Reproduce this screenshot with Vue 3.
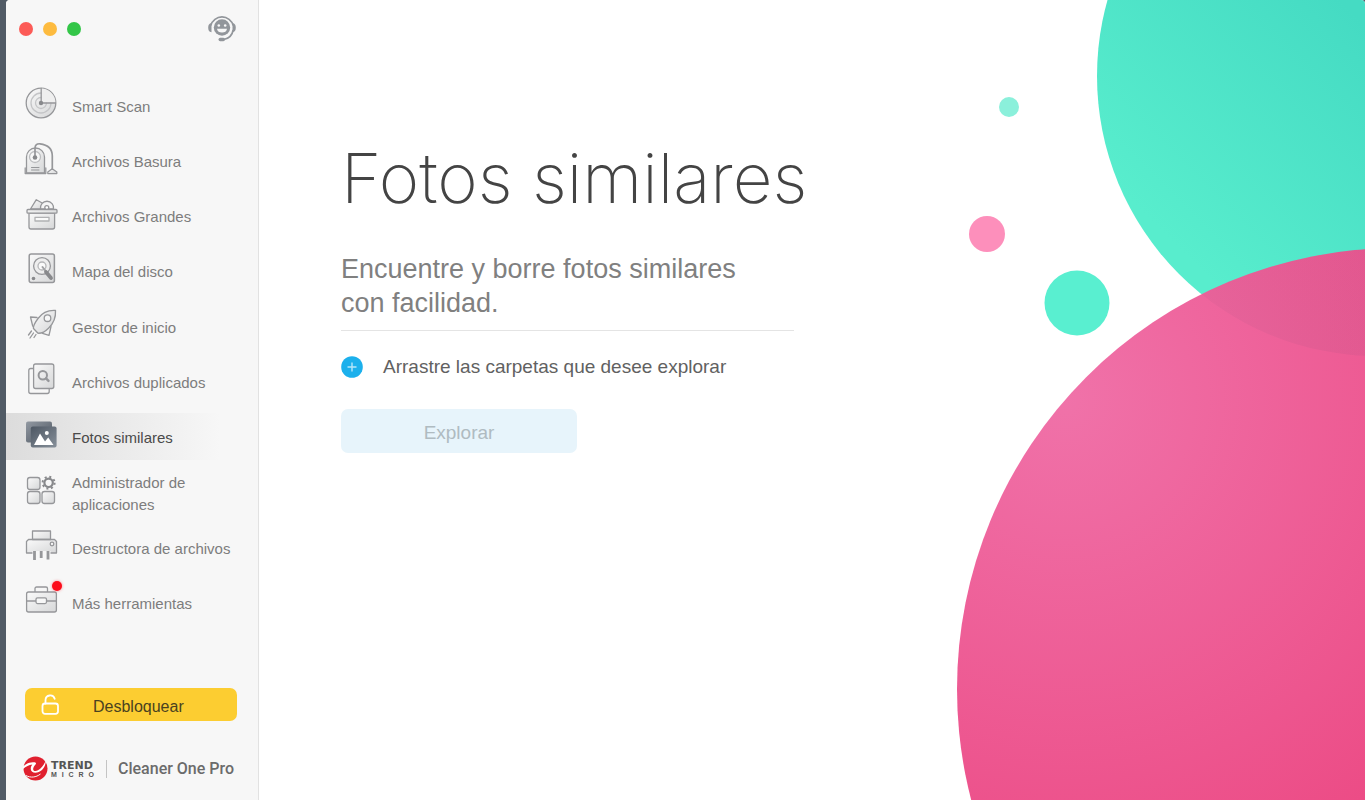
<template>
  <div class="desktop">
    <div class="window">
      <aside class="sidebar">
        <header class="titlebar">
          <div class="lights">
            <button class="light light-close" aria-label="Cerrar"></button>
            <button class="light light-min" aria-label="Minimizar"></button>
            <button class="light light-max" aria-label="Ampliar"></button>
          </div>
          <button class="support" aria-label="Soporte">
            <svg width="30" height="30" viewBox="0 0 30 30">
              <circle cx="15" cy="13.5" r="8.2" fill="#92969b" />
              <path d="M3.8 11.5A11.6 11.6 0 0 1 26.2 11.5M26.2 16a11.8 11.8 0 0 1-9.5 9.5" fill="none" stroke="#92969b" stroke-width="1.7" />
              <path d="M4.5 9v9.2c-2.300-.2-3.300-1.800-3.300-4.500s1-4.500 3.300-4.700zM25.500 9v9.200c2.300-.2 3.300-1.800 3.300-4.500s-1-4.500-3.300-4.700z" fill="#92969b" />
              <rect x="11.5" y="23.8" width="6.5" height="3.4" rx="1.7" fill="#92969b" />
              <circle cx="11.8" cy="11.5" r="1.3" fill="#f7f7f7" />
              <circle cx="18.2" cy="11.5" r="1.3" fill="#f7f7f7" />
              <path d="M10 14.8h10c-.4 2.600-2.300 3.800-5 3.800s-4.600-1.200-5-3.800z" fill="#f7f7f7" />
            </svg>
          </button>
        </header>

        <nav>
          <ul class="menu">
            <li v-for="item in items" :key="item.id">
              <a
                href="#"
                class="menu-item"
                :class="{ active: item.id === current }"
                @click.prevent="current = item.id"
              >
                <svg class="icon" width="40" height="40" viewBox="0 0 40 40">
                  <defs>
                    <linearGradient :id="'g-' + item.id" x1="0" y1="0" x2="1" y2="1">
                      <stop offset="0" stop-color="#fafafa" />
                      <stop offset="1" stop-color="#d6d7d8" />
                    </linearGradient>
                  </defs>
                  <g
                    :fill="`url(#g-${item.id})`"
                    stroke="#96979a"
                    stroke-width="1.3"
                    stroke-linejoin="round"
                    stroke-linecap="round"
                  >
                    <template v-if="item.id === 'scan'">
                      <circle cx="19" cy="18" r="14.8" />
                      <circle cx="19" cy="18" r="10" fill="none" stroke="#c4c5c7" />
                      <circle cx="19" cy="18" r="5.5" fill="none" stroke="#c4c5c7" />
                      <path d="M19.5 3.5A14.5 14.5 0 0 1 33.5 17.5H19.5z" fill="#efefef" stroke="none" />
                      <path d="M19.2 3.5V18H33.5" fill="none" />
                      <circle cx="19" cy="18" r="2.2" fill="#88898c" stroke="none" />
                    </template>
                    <template v-else-if="item.id === 'junk'">
                      <path d="M4.5 33V17a9 9 0 0 1 18 0v16z" />
                      <path d="M3.2 28v5.5h20.6V28" fill="none" />
                      <circle cx="13" cy="17" r="5.5" fill="#f7f7f7" stroke="#bdbec0" />
                      <path d="M13 17V8.500c0-3.500 2-5 5-4.700C26 4.800 30.300 9 30.300 16v12.500" fill="none" stroke-width="1.7" />
                      <circle cx="13" cy="17.5" r="2.3" fill="#88898c" stroke="none" />
                      <path d="M9.5 27.5h7.5M9.5 30h7.5" fill="none" stroke-width="1" />
                      <path d="M30.2 28.8l-4.400 3.200v1.600h9V32z" />
                    </template>
                    <template v-else-if="item.id === 'large'">
                      <path d="M8.5 14l5.800-9.300 8.200 4.600-3 4.700z" />
                      <path d="M18.5 14a6.600 6.600 0 1 1 13 0z" fill="#f5f5f5" />
                      <circle cx="24.8" cy="12.6" r="2" fill="#fff" />
                      <path d="M7 18.2h25.6V32a2 2 0 0 1-2 2H9a2 2 0 0 1-2-2z" />
                      <rect x="5" y="14.5" width="30" height="3.7" rx="1" />
                      <rect x="13" y="22.3" width="14" height="3.7" fill="#fafafa" stroke="#b0b1b3" />
                    </template>
                    <template v-else-if="item.id === 'disk'">
                      <rect x="7.2" y="4" width="25.2" height="28.5" rx="2" stroke-width="1.5" />
                      <circle cx="20" cy="16" r="8.4" fill="#eee" />
                      <circle cx="20" cy="16" r="4" fill="#fafafa" stroke="#b5b6b8" />
                      <path d="M20.5 17l3.500 4.500" fill="none" stroke="#a0a1a4" stroke-width="2" />
                      <path d="M24 22l5 6" fill="none" stroke="#88898c" stroke-width="3.8" />
                      <circle cx="11.5" cy="28.5" r="1.8" fill="#88898c" stroke="none" />
                    </template>
                    <template v-else-if="item.id === 'startup'">
                      <path d="M15 11.5L8.5 11l2.200 9M29 20.500l-2 8.800-6.500-2" fill="#f2f2f2" />
                      <path d="M33.5 4.5c-8-.5-13.500 2.500-17.500 8-3 4-5 7.500-4.500 10l4.500 4.700c3.500.3 7-1.500 10.500-5 5-4.700 7.500-10 7-17.700z" />
                      <circle cx="25.5" cy="12.2" r="3.3" fill="#f7f7f7" />
                      <path d="M9.5 25l-3 4M11.5 27l-3.500 5M14 28.500l-2 3" fill="none" />
                    </template>
                    <template v-else-if="item.id === 'duplicates'">
                      <rect x="6.8" y="7.5" width="20.4" height="25" rx="2" fill="#f7f7f7" />
                      <rect x="11.6" y="3" width="20.2" height="24.5" rx="2" />
                      <circle cx="20.8" cy="14.2" r="4.2" fill="none" stroke-width="2" />
                      <path d="M24 17.4l2.500 2.500" fill="none" stroke-width="2.4" />
                    </template>
                    <template v-else-if="item.id === 'photos'">
                      <linearGradient id="photo-back" x1="0" y1="0" x2="1" y2="1">
                        <stop offset="0" stop-color="#9299a2" />
                        <stop offset="1" stop-color="#4d5661" />
                      </linearGradient>
                      <linearGradient id="photo-front" x1="0" y1="0" x2="1" y2="1">
                        <stop offset="0" stop-color="#4d5763" />
                        <stop offset="1" stop-color="#87909a" />
                      </linearGradient>
                      <g stroke="none">
                        <rect x="4" y="5.5" width="26" height="21" rx="2" fill="url(#photo-back)" />
                        <rect x="8.8" y="10.5" width="25.8" height="21" rx="2" fill="url(#photo-front)" />
                        <path d="M12 29l6-11.500 5 8 3.200-4 5.300 7.500z" fill="#fff" />
                        <circle cx="24.8" cy="17" r="2" fill="#fff" />
                      </g>
                    </template>
                    <template v-else-if="item.id === 'apps'">
                      <rect x="5.5" y="5.5" width="12.5" height="12" rx="2.5" />
                      <rect x="5.5" y="19.5" width="12.5" height="12" rx="2.5" />
                      <rect x="20" y="19.5" width="12.5" height="12" rx="2.5" />
                      <circle cx="26.6" cy="10.8" r="4.2" fill="#f7f7f7" stroke="#88898c" stroke-width="2.2" />
                      <circle cx="26.6" cy="10.8" r="6" fill="none" stroke="#88898c" stroke-width="2" stroke-dasharray="2 2.71" stroke-linecap="butt" />
                    </template>
                    <template v-else-if="item.id === 'shredder'">
                      <rect x="10.5" y="4" width="18" height="11" />
                      <path d="M6.5 12.5h26l2 2V26h-30V14.5z" />
                      <path d="M10.5 12.5h18" fill="none" />
                      <circle cx="30" cy="17" r="1.8" fill="#f7f7f7" />
                      <path d="M10.5 24h18v6h-18z" fill="#f7f7f7" stroke="none" />
                      <path d="M12.5 24v9M19.2 24v7M26 24v8.5" fill="none" stroke-width="2.8" stroke-linecap="butt" />
                    </template>
                    <template v-else>
                      <path d="M13 10V6.500a1.500 1.500 0 0 1 1.500-1.500h9.500a1.500 1.500 0 0 1 1.500 1.500V10" fill="none" />
                      <rect x="4.6" y="10" width="29.8" height="20" rx="2" />
                      <path d="M5 19h29" fill="none" />
                      <rect x="14" y="15.8" width="10.5" height="5.8" rx="1.5" fill="#f7f7f7" />
                    </template>
                  </g>
                </svg>
                <span class="label">{{ item.label }}</span>
                <span v-if="item.badge" class="badge"></span>
              </a>
            </li>
          </ul>
        </nav>

        <button class="unlock">
          <svg width="20" height="24" viewBox="0 0 20 24" fill="none" stroke="#fff" stroke-width="1.8">
            <rect x="1.5" y="10.5" width="15.5" height="10.3" rx="2.5" />
            <path d="M4.5 10.5V7a4.700 4.700 0 0 1 9.200-1.200" stroke-linecap="round" />
          </svg>
          <span>Desbloquear</span>
        </button>

        <footer class="brand">
          <svg width="25" height="25" viewBox="0 0 25 25">
            <circle cx="12.5" cy="12.5" r="12" fill="#e0202f" />
            <path d="M0 10.500C2.500 8 6 6 10.500 6.200c2.200.1 3 .8 2.200 2C11 10 10 11.800 10.200 13.500c.4 1.800 2.600 1.900 4.800.8 3.700-1.900 6.300-6 8-10.300-.3 6-3 10.300-7.200 12-4 1.600-7.700.5-8-2.800-.2-2.200.6-3.500 1.500-4.800C6 8.500 3 10.500 0 13z" fill="#fff" />
            <path d="M3 19.500c4.500 2.500 10 2 14.500-1.500" fill="none" stroke="#f7f7f7" stroke-width="1" />
          </svg>
          <span class="brand-name">
            <span class="trend">TREND</span>
            <span class="micro"><i>M</i><i>I</i><i>C</i><i>R</i><i>O</i></span>
          </span>
          <span class="product">Cleaner One Pro</span>
        </footer>
      </aside>

      <main class="content">
        <svg class="bubbles" width="425" height="800" viewBox="0 0 425 800" aria-hidden="true">
          <defs>
            <linearGradient id="mint" gradientUnits="userSpaceOnUse" x1="220" y1="230" x2="425" y2="25">
              <stop offset="0" stop-color="#58edcd" />
              <stop offset="1" stop-color="#45dbc3" />
            </linearGradient>
            <radialGradient id="pink" gradientUnits="userSpaceOnUse" cx="125" cy="400" r="510">
              <stop offset="0" stop-color="#f072a9" />
              <stop offset="1" stop-color="#ec4b85" />
            </radialGradient>
            <linearGradient id="shade" gradientUnits="userSpaceOnUse" x1="262" y1="300" x2="425" y2="300">
              <stop offset="0" stop-color="#a05080" stop-opacity="0.1" />
              <stop offset="1" stop-color="#a05080" stop-opacity="0.14" />
            </linearGradient>
            <clipPath id="pink-clip">
              <circle cx="458" cy="689" r="441" />
            </clipPath>
          </defs>
          <circle cx="69" cy="107" r="10" fill="#8bf0db" />
          <circle cx="47" cy="234" r="18" fill="#fd8fbb" />
          <circle cx="137" cy="303" r="32.5" fill="#59efd0" />
          <circle cx="437" cy="76" r="280" fill="url(#mint)" />
          <circle cx="458" cy="689" r="441" fill="url(#pink)" />
          <circle cx="437" cy="76" r="280" fill="url(#shade)" clip-path="url(#pink-clip)" />
        </svg>

        <section class="panel">
          <h1>Fotos similares</h1>
          <p class="lead">Encuentre y borre fotos similares con facilidad.</p>
          <div class="drop">
            <button class="add" aria-label="Añadir carpeta">
              <svg width="22" height="22" viewBox="0 0 22 22">
                <circle cx="11" cy="11" r="10.8" fill="#1cb0ec" />
                <path d="M11 6.5v9M6.500 11h9" stroke="#b5e6f9" stroke-width="1.4" />
              </svg>
            </button>
            <span>Arrastre las carpetas que desee explorar</span>
          </div>
          <button class="explore" disabled>Explorar</button>
        </section>
      </main>
    </div>
  </div>
</template>

<script setup>
import { ref } from 'vue'

const current = ref('photos')

const items = [
  { id: 'scan', label: 'Smart Scan' },
  { id: 'junk', label: 'Archivos Basura' },
  { id: 'large', label: 'Archivos Grandes' },
  { id: 'disk', label: 'Mapa del disco' },
  { id: 'startup', label: 'Gestor de inicio' },
  { id: 'duplicates', label: 'Archivos duplicados' },
  { id: 'photos', label: 'Fotos similares' },
  { id: 'apps', label: 'Administrador de aplicaciones' },
  { id: 'shredder', label: 'Destructora de archivos' },
  { id: 'tools', label: 'Más herramientas', badge: true },
]
</script>

<style>
body {
  background: #515b66;
}
</style>

<style scoped>
* {
  box-sizing: border-box;
}

button {
  border: none;
  padding: 0;
  background: none;
  font-family: inherit;
}

.desktop {
  min-height: 100vh;
  padding-left: 6px;
  display: flex;
  background: #515b66;
  font-family: 'Liberation Sans', Arial, sans-serif;
}

.window {
  flex: 1;
  display: flex;
  border-radius: 4px 4px 0 0;
  overflow: hidden;
  background: #fff;
}

.sidebar {
  width: 253px;
  flex-shrink: 0;
  background: #f7f7f7;
  border-right: 1px solid #e2e2e2;
}

.titlebar {
  height: 58px;
  padding: 0 21px 0 13px;
  display: flex;
  align-items: center;
  justify-content: space-between;
}

.lights {
  display: flex;
  gap: 10px;
}

.light {
  width: 14px;
  height: 14px;
  border-radius: 50%;
}

.light-close {
  background: #fc5b57;
}

.light-min {
  background: #fdbb3f;
}

.light-max {
  background: #33c648;
}

.support svg {
  display: block;
}

.menu {
  list-style: none;
  margin: 23px 0 0;
  padding: 0;
  min-height: 545px;
  display: flex;
  flex-direction: column;
  justify-content: space-between;
}

.menu-item {
  position: relative;
  height: 47px;
  padding-left: 16px;
  display: flex;
  align-items: center;
  gap: 10px;
  color: #7d7d7d;
  font-size: 15px;
  line-height: 22px;
  text-decoration: none;
}

.menu-item.active {
  color: #4a4a4a;
  background: linear-gradient(90deg, #dcdcdc, #f7f7f7 85%);
}

.icon {
  flex-shrink: 0;
}

.label {
  padding-top: 4px;
}

.badge {
  position: absolute;
  left: 46px;
  top: 2px;
  width: 10px;
  height: 10px;
  border-radius: 50%;
  background: #fc0d1b;
  box-shadow: 0 0 3px #fc0d1b80;
}

.unlock {
  width: 212px;
  height: 33px;
  margin: 62px 0 0 19px;
  padding-left: 16px;
  display: flex;
  align-items: center;
  gap: 32px;
  border-radius: 7px;
  background: #fccd31;
  color: #4a4220;
  font-size: 16px;
}

.unlock span {
  padding-top: 4px;
}

.brand {
  margin: 35px 0 0 17px;
  display: flex;
  align-items: center;
}

.brand-name {
  width: 43px;
  margin-left: 3px;
  display: flex;
  flex-direction: column;
  color: #555;
  font-weight: bold;
}

.trend {
  font-family: 'DejaVu Sans', sans-serif;
  font-size: 11px;
  line-height: 11px;
}

.micro {
  display: flex;
  justify-content: space-between;
  font-size: 7px;
  line-height: 7px;
}

.micro i {
  font-style: normal;
}

.product {
  margin-left: 12px;
  padding-left: 11px;
  border-left: 1px solid #c4c4c4;
  color: #6b6b6b;
  font-family: Roboto, sans-serif;
  font-size: 16px;
  font-weight: 500;
  line-height: 18px;
}

.content {
  position: relative;
  flex: 1;
  padding-left: 82px;
}

.bubbles {
  position: absolute;
  top: 0;
  right: 0;
}

.panel {
  position: relative;
  width: 470px;
  padding-top: 132px;
}

h1 {
  margin: 0;
  color: #444;
  font-family: Inter, 'Liberation Sans', sans-serif;
  font-size: 69px;
  font-weight: 200;
  line-height: 92px;
  white-space: nowrap;
}

.lead {
  width: 453px;
  margin: 28px 0 0;
  padding: 0 40px 10px 0;
  border-bottom: 1px solid #e4e4e4;
  color: #808080;
  font-size: 27px;
  line-height: 34px;
}

.drop {
  margin-top: 25px;
  display: flex;
  align-items: center;
  gap: 20px;
  color: #616161;
  font-size: 19px;
  line-height: 22px;
}

.add {
  width: 22px;
  height: 22px;
}

.add svg {
  display: block;
}

.explore {
  width: 236px;
  height: 44px;
  margin-top: 31px;
  padding-top: 4px;
  border-radius: 7px;
  background: #e7f4fb;
  color: #afbbc1;
  font-size: 19px;
}
</style>
